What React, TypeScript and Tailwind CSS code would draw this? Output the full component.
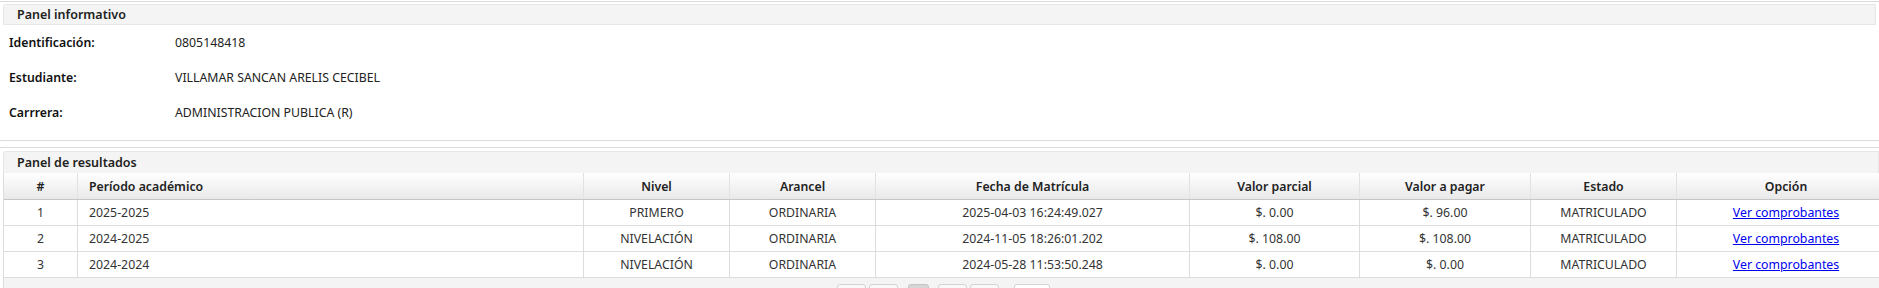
const info = [
  { label: 'Identificación:', value: '0805148418' },
  { label: 'Estudiante:', value: 'VILLAMAR SANCAN ARELIS CECIBEL' },
  { label: 'Carrrera:', value: 'ADMINISTRACION PUBLICA (R)' },
];

const rows = [
  { n: '1', periodo: '2025-2025', nivel: 'PRIMERO', arancel: 'ORDINARIA', fecha: '2025-04-03 16:24:49.027', parcial: '$. 0.00', pagar: '$. 96.00', estado: 'MATRICULADO' },
  { n: '2', periodo: '2024-2025', nivel: 'NIVELACIÓN', arancel: 'ORDINARIA', fecha: '2024-11-05 18:26:01.202', parcial: '$. 108.00', pagar: '$. 108.00', estado: 'MATRICULADO' },
  { n: '3', periodo: '2024-2024', nivel: 'NIVELACIÓN', arancel: 'ORDINARIA', fecha: '2024-05-28 11:53:50.248', parcial: '$. 0.00', pagar: '$. 0.00', estado: 'MATRICULADO' },
];

const cols = 'grid grid-cols-[74px_506px_146px_146px_314px_170px_171px_146px_218px]';

export default function App() {
  return (
    <div className="h-[288px] w-[1879px] overflow-hidden bg-white font-['Segoe_UI','Noto_Sans',sans-serif] text-[12.3px] leading-[17px] text-[#333]">
      {/* Panel informativo */}
      <div className="mt-px border-t border-[#dadada] pt-[2px]">
        <div className="mx-[3px] flex h-[21px] items-center rounded-tl-[3px] border border-[#e6e6e6] bg-[#f4f4f4] pl-[13px] text-[12.5px] font-semibold text-[#222]">
          Panel informativo
        </div>
        <div className="pb-[10px]">
          {info.map((r) => (
            <div key={r.label} className="flex h-[35px] items-center">
              <span className="w-[175px] pl-[9px] font-semibold text-[#111]">{r.label}</span>
              <span className="text-[#222]">{r.value}</span>
            </div>
          ))}
        </div>
      </div>

      {/* Panel de resultados */}
      <div className="border-t border-[#dcdcdc]" />
      <div className="mt-[6px] border-t border-[#dcdcdc] pt-[3px]">
        <div className="ml-[3px] flex h-[22px] items-center rounded-tl-[3px] border border-b-0 border-[#e6e6e6] bg-[#f4f4f4] pl-[13px] text-[12.5px] font-semibold text-[#222]">
          Panel de resultados
        </div>
        <div className="ml-[3px] border-l border-[#dddddd]">
          <div className={`${cols} h-[27px] border-b border-[#c6c6c6] bg-gradient-to-b from-[#ffffff] to-[#e9e9e9] font-semibold text-[#222]`}>
            <div className="flex items-center justify-center border-r border-[#e2e2e2]">#</div>
            <div className="flex items-center border-r border-[#e2e2e2] pl-[11px]">Período académico</div>
            <div className="flex items-center justify-center border-r border-[#e2e2e2]">Nivel</div>
            <div className="flex items-center justify-center border-r border-[#e2e2e2]">Arancel</div>
            <div className="flex items-center justify-center border-r border-[#e2e2e2]">Fecha de Matrícula</div>
            <div className="flex items-center justify-center border-r border-[#e2e2e2]">Valor parcial</div>
            <div className="flex items-center justify-center border-r border-[#e2e2e2]">Valor a pagar</div>
            <div className="flex items-center justify-center border-r border-[#e2e2e2]">Estado</div>
            <div className="flex items-center justify-center">Opción</div>
          </div>
          {rows.map((r) => (
            <div key={r.n} className={`${cols} h-[26px] border-b border-[#dddddd] text-[#333]`}>
              <div className="flex items-center justify-center border-r border-[#dddddd]">{r.n}</div>
              <div className="flex items-center border-r border-[#dddddd] pl-[11px]">{r.periodo}</div>
              <div className="flex items-center justify-center border-r border-[#dddddd]">{r.nivel}</div>
              <div className="flex items-center justify-center border-r border-[#dddddd]">{r.arancel}</div>
              <div className="flex items-center justify-center border-r border-[#dddddd]">{r.fecha}</div>
              <div className="flex items-center justify-center border-r border-[#dddddd]">{r.parcial}</div>
              <div className="flex items-center justify-center border-r border-[#dddddd]">{r.pagar}</div>
              <div className="flex items-center justify-center border-r border-[#dddddd]">{r.estado}</div>
              <div className="flex items-center justify-center">
                <a href="#" className="text-[#0000ee] underline">Ver comprobantes</a>
              </div>
            </div>
          ))}
          {/* Paginator */}
          <div className="flex h-[20px] bg-[#f4f4f4] pl-[833px] pt-[6px]">
            <span className="h-[16px] w-[29px] rounded-[3px] border border-[#d4d4d4] bg-[#f9f9f9]" />
            <span className="ml-[3px] h-[16px] w-[29px] rounded-[3px] border border-[#d4d4d4] bg-[#f9f9f9]" />
            <span className="ml-[10px] h-[16px] w-[21px] rounded-[3px] border border-[#c4c4c4] bg-[#d6d6d6]" />
            <span className="ml-[9px] h-[16px] w-[29px] rounded-[3px] border border-[#d4d4d4] bg-[#f9f9f9]" />
            <span className="ml-[3px] h-[16px] w-[29px] rounded-[3px] border border-[#d4d4d4] bg-[#f9f9f9]" />
            <span className="ml-[15px] h-[16px] w-[36px] rounded-[3px] border border-[#d4d4d4] bg-white" />
          </div>
        </div>
      </div>
    </div>
  );
}
